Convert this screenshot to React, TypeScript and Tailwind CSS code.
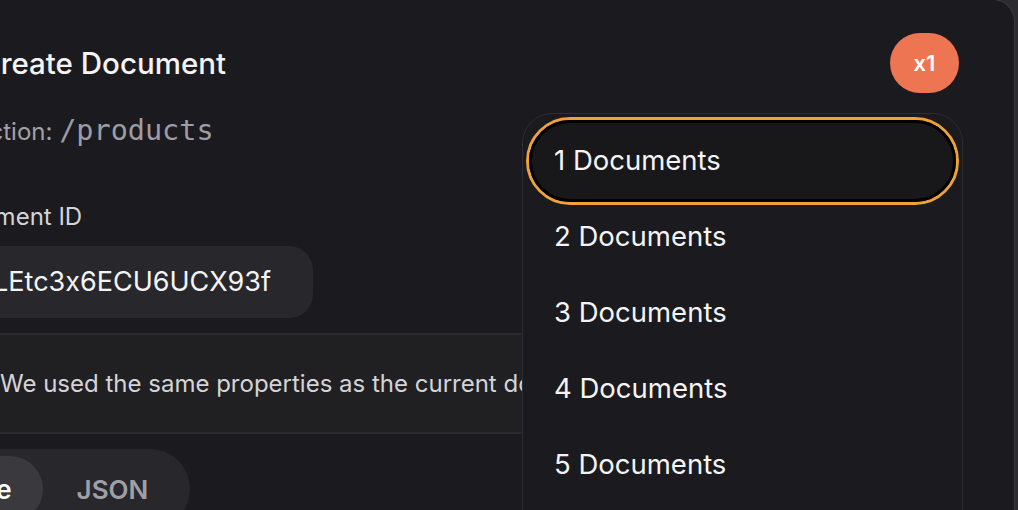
import React from 'react';

const items = ['2 Documents', '3 Documents', '4 Documents', '5 Documents'];

export default function App() {
  return (
    <div
      className="w-[1018px] h-[510px] bg-[#2c2c30] overflow-hidden [font-feature-settings:'calt'_0]"
      style={{ fontFamily: 'Inter, "Noto Sans", sans-serif' }}
    >
      <div className="relative mt-[-1px] w-[1015px] h-[511px] bg-[#1b1b1f] border-r border-t border-[#3a3a3e] rounded-tr-[22px] overflow-hidden">
        {/* Header */}
        <div className="flex items-center justify-between pt-[33px] pr-[55px]">
          <h1 className="ml-[-21px] text-[29.5px] leading-[36px] font-medium text-[#f4f4f5] whitespace-nowrap">Create Document</h1>
          <div className="w-[69px] h-[60px] rounded-full bg-[#ee7552] flex items-center justify-center text-[22px] font-semibold text-white">
            x1
          </div>
        </div>

        {/* Collection */}
        <div className="mt-[22px] ml-[-68px] text-[24px] leading-[32px] text-[#a1a1aa] whitespace-nowrap">
          Collection:{' '}
          <span className="text-[28.5px] text-[#9d9da5]" style={{ fontFamily: '"DejaVu Sans Mono", monospace' }}>
            /products
          </span>
        </div>

        {/* Document ID */}
        <div className="mt-[53px] ml-[-65px] text-[24px] leading-[32px] text-[#d4d4d8] whitespace-nowrap">Document ID</div>
        <div className="mt-[13px] ml-[-90px] w-[403px] h-[72px] rounded-[24px] bg-[#28282c] flex items-center justify-end pr-[42px] text-[27px] text-[#f4f4f5] whitespace-nowrap">
          A1LEtc3x6ECU6UCX93f
        </div>

        {/* Banner */}
        <div className="mt-[15px] flex items-center">
          <div className="ml-[-80px] w-[980px] h-[101px] bg-[#202023] border-y-2 border-[#2b2b2f] flex items-center">
            <div className="w-full pl-[80px] text-[24px] text-[#d4d4d8] whitespace-nowrap overflow-hidden">
              We used the same properties as the current document. You can edit them below.
            </div>
          </div>
          <div className="ml-[-60px] w-[60px] h-[60px] shrink-0 rounded-full border-2 border-[#2d2d31]"></div>
        </div>

        {/* Segmented control */}
        <div className="mt-[15px] ml-[-88px] inline-flex items-center h-[80px] rounded-full bg-[#28282c] pl-[7px] pr-[8px]">
          <div className="h-[66px] rounded-full bg-[#3a3a3e] flex items-center pl-[24px] pr-[31px] text-[26px] font-semibold text-white">Table</div>
          <div className="px-[34px] text-[26px] font-semibold text-[#9f9fa7]">JSON</div>
        </div>

        {/* Dropdown menu */}
        <div className="absolute left-[522px] top-[113px] w-[441px] h-[420px] rounded-t-[30px] border border-[#2e2e32] bg-[#1b1b1f] p-[3px]">
          <div className="h-[88px] rounded-full border-[3px] border-[#f0a13a]">
            <div className="h-full rounded-full border-[3px] border-black bg-[#18181b] flex items-center pl-[22px] text-[27.5px] text-[#f4f4f5]">
              1 Documents
            </div>
          </div>
          <div className="mt-[-6px] flex flex-col">
            {items.map((label) => (
              <div key={label} className="h-[76px] flex items-center pl-[28px] text-[27.5px] text-[#f4f4f5]">
                {label}
              </div>
            ))}
          </div>
        </div>
      </div>
    </div>
  );
}
